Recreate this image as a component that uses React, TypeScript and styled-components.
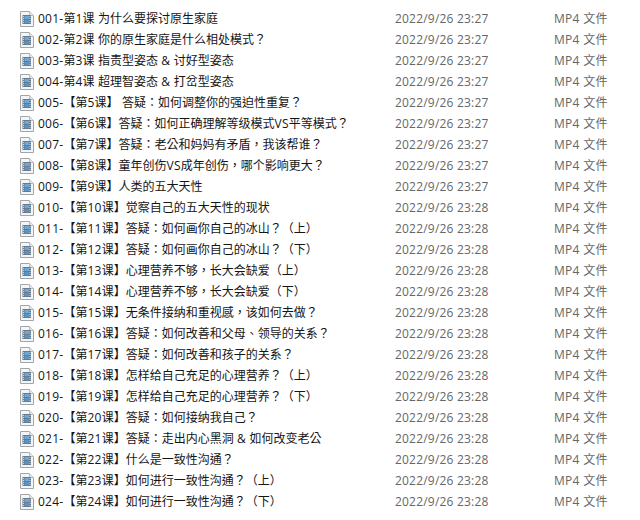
import React from "react";
import styled, { createGlobalStyle } from "styled-components";

const Global = createGlobalStyle`
  html, body { margin: 0; padding: 0; background: #fff; }
  body { font-family: "Open Sans", "Noto Sans CJK TC", sans-serif; font-size: 12px; }
`;

const List = styled.div`
  width: 640px;
  height: 520px;
  padding-top: 8px;
  box-sizing: border-box;
  overflow: hidden;
`;

const Row = styled.div`
  display: grid;
  grid-template-columns: 18px 357px 160px 1fr;
  height: 21px;
  align-items: center;
  padding-left: 20px;
  white-space: nowrap;
  line-height: 21px;
`;

const IconCell = styled.div`
  display: flex;
  align-items: center;
  height: 21px;
`;

const Name = styled.div`
  color: #151515;
  font-size: 12px;
`;

const Latin = styled.span`
  letter-spacing: 0.25px;
`;

const Muted = styled.div`
  color: #666;
  font-size: 12px;
  letter-spacing: 0.2px;
`;

const TypeText = styled(Muted)`
  margin-left: -1px;
  letter-spacing: 0.3px;
`;

const FileIcon = () => (
  <svg width="14" height="16" viewBox="0 0 14 16">
    <path d="M.5.5h9l4 4v11H.5z" fill="#f4f5f7" stroke="#a3a6a9" />
    <path d="M9.5.5v4h4" fill="#e6e8ea" stroke="#bcbec0" />
    <rect x="2.5" y="4" width="8.5" height="9" fill="#6b7989" />
    <rect x="4.5" y="5" width="4.5" height="3" fill="#6aa8dc" />
    <rect x="4.5" y="9" width="4.5" height="3" fill="#5594cb" />
    <rect x="3" y="5" width="1" height="1" fill="#d5dade" />
    <rect x="3" y="7" width="1" height="1" fill="#d5dade" />
    <rect x="3" y="9" width="1" height="1" fill="#d5dade" />
    <rect x="3" y="11" width="1" height="1" fill="#d5dade" />
    <rect x="9.5" y="5" width="1" height="1" fill="#d5dade" />
    <rect x="9.5" y="7" width="1" height="1" fill="#d5dade" />
    <rect x="9.5" y="9" width="1" height="1" fill="#d5dade" />
    <rect x="9.5" y="11" width="1" height="1" fill="#d5dade" />
  </svg>
);

const names = [
  "001-第1课 为什么要探讨原生家庭",
  "002-第2课 你的原生家庭是什么相处模式？",
  "003-第3课 指责型姿态 & 讨好型姿态",
  "004-第4课 超理智姿态 & 打岔型姿态",
  "005-【第5课】 答疑：如何调整你的强迫性重复？",
  "006-【第6课】答疑：如何正确理解等级模式VS平等模式？",
  "007-【第7课】答疑：老公和妈妈有矛盾，我该帮谁？",
  "008-【第8课】童年创伤VS成年创伤，哪个影响更大？",
  "009-【第9课】人类的五大天性",
  "010-【第10课】觉察自己的五大天性的现状",
  "011-【第11课】答疑：如何画你自己的冰山？（上）",
  "012-【第12课】答疑：如何画你自己的冰山？（下）",
  "013-【第13课】心理营养不够，长大会缺爱（上）",
  "014-【第14课】心理营养不够，长大会缺爱（下）",
  "015-【第15课】无条件接纳和重视感，该如何去做？",
  "016-【第16课】答疑：如何改善和父母、领导的关系？",
  "017-【第17课】答疑：如何改善和孩子的关系？",
  "018-【第18课】怎样给自己充足的心理营养？（上）",
  "019-【第19课】怎样给自己充足的心理营养？（下）",
  "020-【第20课】答疑：如何接纳我自己？",
  "021-【第21课】答疑：走出内心黑洞 & 如何改变老公",
  "022-【第22课】什么是一致性沟通？",
  "023-【第23课】如何进行一致性沟通？（上）",
  "024-【第24课】如何进行一致性沟通？（下）",
];

const runs = (s: string) =>
  s.split(/([\x20-\x7e]+)/).map((part, i) =>
    /^[\x20-\x7e]+$/.test(part) ? <Latin key={i}>{part}</Latin> : part
  );

export default function App() {
  return (
    <>
      <Global />
      <List>
        {names.map((n, i) => (
          <Row key={n}>
            <IconCell><FileIcon /></IconCell>
            <Name>{runs(n)}</Name>
            <Muted>2022/9/26 {i < 9 ? "23:27" : "23:28"}</Muted>
            <TypeText>MP4 文件</TypeText>
          </Row>
        ))}
      </List>
    </>
  );
}
